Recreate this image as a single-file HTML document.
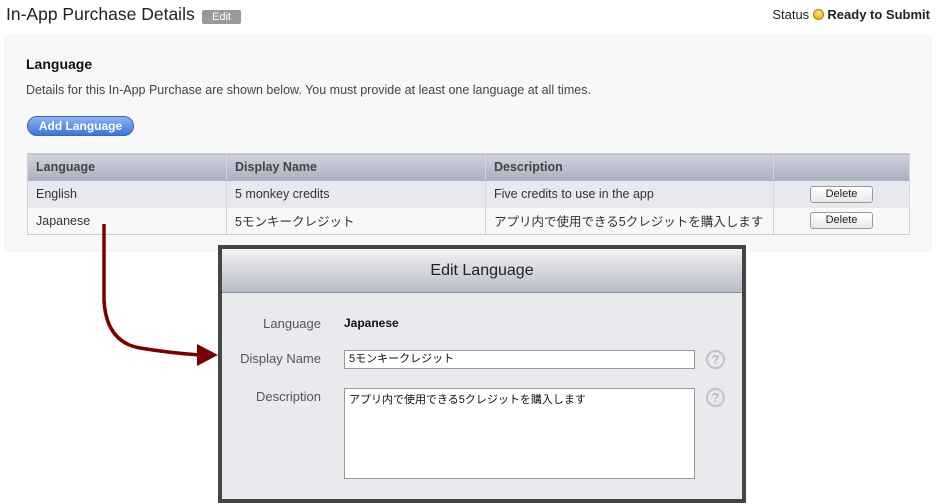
<!DOCTYPE html>
<html><head><meta charset="utf-8"><style>
*{box-sizing:border-box;margin:0;padding:0}
body{width:936px;height:504px;background:#fff;font-family:"Liberation Sans","Noto Sans CJK JP",sans-serif;color:#333;position:relative;overflow:hidden}
.abs{position:absolute}
.title{left:6px;top:4px;font-size:17.5px;color:#222}
.edit{left:202px;top:10px;width:39px;height:14px;background:#999;color:#fff;font-size:11px;text-align:center;line-height:14px;border-radius:2px}
.status{right:6px;top:7px;font-size:13px;color:#222}
.panel{left:6px;top:36px;width:924px;height:214px;background:#f8f8f8;border-radius:3px;box-shadow:0 0 2px #ddd}
.h{left:26px;top:56px;font-size:14px;font-weight:bold;color:#111}
.d{left:26px;top:83px;font-size:12.5px;color:#444}
.btn{left:27px;top:116px;width:107px;height:20px;border-radius:10px;background:linear-gradient(#8db4f2,#3c74dd);border:1px solid #3c66b8;color:#fff;font-size:12px;font-weight:bold;text-align:center;line-height:18px}
table{position:absolute;left:27px;top:153px;width:883px;border-collapse:collapse;font-size:12.5px;border:1px solid #c9cbd6}
td,th{height:27px;padding:0 8px;text-align:left;border-right:1px solid #d4d6de}
th{background:linear-gradient(#cfd3de,#a9afbf);color:#444;font-size:12.5px}
tr.a td{background:#e8e9ee}
tr.b td{background:#f8f8f8}
.del{display:inline-block;width:63px;height:17px;border:1px solid #999;border-radius:3px;background:linear-gradient(#fff,#e8e8e8);text-align:center;font-size:11px;line-height:15px;color:#222}
.modal{left:218px;top:245px;width:528px;height:258px;border:4px solid #454545;background:#e9eaee}
.mh{height:44px;background:linear-gradient(#f3f3f6,#b9bcc8);border-bottom:1px solid #8a8d99;text-align:center;font-size:16px;line-height:44px;color:#222}
.lbl{font-size:13px;color:#555;text-align:right;width:100px}
.inp{background:#fff;border:1px solid #999;font-size:11px;color:#111;padding:2px 4px}
.q{width:19px;height:19px;border:2px solid #c4c4c4;border-radius:50%;color:#bbb;font-size:13px;font-weight:bold;text-align:center;line-height:15px}
</style></head><body>
<div class="abs title">In-App Purchase Details</div>
<div class="abs edit">Edit</div>
<div class="abs status">Status <span style="display:inline-block;width:11px;height:11px;border-radius:50%;background:radial-gradient(circle at 50% 35%,#ffe680,#e8a000);border:1px solid #b78000;vertical-align:-1px"></span> <b>Ready to Submit</b></div>
<div class="abs panel"></div>
<div class="abs h">Language</div>
<div class="abs d">Details for this In-App Purchase are shown below. You must provide at least one language at all times.</div>
<div class="abs btn">Add Language</div>
<table>
<tr><th style="width:199px">Language</th><th style="width:259px">Display Name</th><th style="width:288px">Description</th><th></th></tr>
<tr class="a"><td>English</td><td>5 monkey credits</td><td>Five credits to use in the app</td><td style="text-align:center"><span class="del">Delete</span></td></tr>
<tr class="b"><td>Japanese</td><td>5モンキークレジット</td><td>アプリ内で使用できる5クレジットを購入します</td><td style="text-align:center"><span class="del">Delete</span></td></tr>
</table>
<svg class="abs" style="left:0;top:0" width="936" height="504"><path d="M104 224 L104 300 Q106 342 140 348 Q170 353 200 355" fill="none" stroke="#7a0000" stroke-width="3.5"/><polygon points="197,344 218,355 197,366" fill="#7a0000"/></svg>
<div class="abs modal">
<div class="mh">Edit Language</div>
</div>
<div class="abs lbl" style="left:221px;top:316px">Language</div>
<div class="abs" style="left:344px;top:316px;font-size:12px;font-weight:bold;color:#111">Japanese</div>
<div class="abs lbl" style="left:221px;top:351px">Display Name</div>
<div class="abs inp" style="left:344px;top:350px;width:351px;height:19px;line-height:13px">5モンキークレジット</div>
<div class="abs q" style="left:706px;top:350px">?</div>
<div class="abs lbl" style="left:221px;top:389px">Description</div>
<div class="abs inp" style="left:344px;top:388px;width:351px;height:91px">アプリ内で使用できる5クレジットを購入します</div>
<div class="abs q" style="left:706px;top:388px">?</div>
</body></html>
